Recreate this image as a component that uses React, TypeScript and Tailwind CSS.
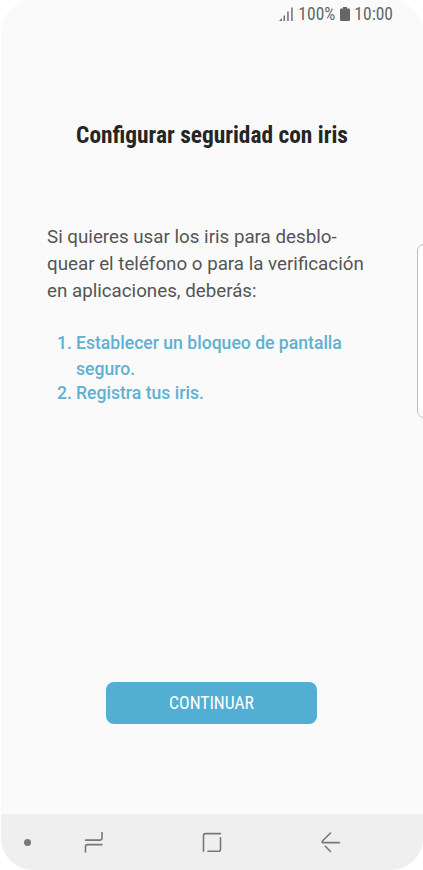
import React from 'react';

const StatusBar: React.FC = () => (
  <div className="flex h-7 items-center justify-end pr-[30px] text-[17.5px] text-[#666666] [font-stretch:75%]">
    <svg width="15" height="15" viewBox="0 0 15 15" fill="#707070" className="mr-1">
      <path d="M0 14 3 11V14Z" />
      <rect x="4.5" y="8.5" width="1.5" height="5.5" />
      <rect x="8.2" y="4.5" width="1.5" height="9.5" />
      <rect x="12.2" y="0.5" width="1.5" height="13.5" />
    </svg>
    <span className="pt-px">100%</span>
    <svg width="10" height="14" viewBox="0 0 10 14" fill="#666666" className="mr-[4px] ml-[5px]">
      <path d="M3 0h4v1.5h2a1 1 0 0 1 1 1V13a1 1 0 0 1-1 1H1a1 1 0 0 1-1-1V2.5a1 1 0 0 1 1-1h2Z" />
    </svg>
    <span className="pt-px">10:00</span>
  </div>
);

const NavBar: React.FC = () => (
  <nav className="flex h-[56px] items-center bg-[#efefef] pl-[22px] text-[#777777]">
    <span className="ml-[0.5px] h-[7px] w-[7px] rounded-full bg-[#777777]" />
    <svg width="20" height="22" viewBox="0 0 20 22" fill="none" stroke="currentColor" strokeWidth="1.6" strokeLinecap="round" strokeLinejoin="round" className="ml-[53.5px]">
      <path d="M1.5 9.1H16q2 0 2-2V1.6M1.5 20.9V15.6q0-2 2-2H18" />
    </svg>
    <svg width="20" height="22" viewBox="0 0 20 22" fill="none" stroke="currentColor" strokeWidth="1.6" strokeLinecap="round" strokeLinejoin="round" className="ml-[98px]">
      <path d="M1.5 20.3V4.6q0-2 2-2H18.5M18.5 6.8V18.3q0 2-2 2H6" />
    </svg>
    <svg width="20" height="22" viewBox="0 0 20 22" fill="none" stroke="currentColor" strokeWidth="1.6" strokeLinecap="round" strokeLinejoin="round" className="ml-[99px]">
      <path d="M9.5 2 1.2 10.2V11.6H18.5M4.3 15.3 9.5 20.5" />
    </svg>
  </nav>
);

export default function App() {
  return (
    <div className="relative h-[870px] w-[423px] overflow-hidden bg-white font-['Roboto',sans-serif]">
      <div className="ml-px flex h-[870px] w-[422px] flex-col overflow-hidden rounded-[32px] bg-[#fafafa]">
        <StatusBar />

        <main className="flex flex-1 flex-col">
          <h1 className="mt-[91px] text-center text-[23.4px] leading-8 font-bold text-[#252525] [font-stretch:75%]">
            Configurar seguridad con iris
          </h1>

          <p className="mt-[73px] pl-[46px] text-[18.75px] leading-[27px] text-[#555555]">
            Si quieres usar los iris para desblo-
            <br />
            quear el teléfono o para la verificación
            <br />
            en aplicaciones, deberás:
          </p>

          <ol className="mt-[25px] pl-[56px] text-[17.6px] leading-[26px] font-medium text-[#5eb1d1]">
            <li className="flex">
              <span className="w-[19px]">1.</span>
              <span>
                Establecer un bloqueo de pantalla
                <br />
                seguro.
              </span>
            </li>
            <li className="-mt-0.5 flex">
              <span className="w-[19px]">2.</span>
              <span>Registra tus iris.</span>
            </li>
          </ol>

          <button className="mt-auto mb-[90px] ml-[105px] h-[42px] w-[211px] rounded-lg bg-[#52aed2] text-[17.6px] text-white [font-stretch:75%]">
            CONTINUAR
          </button>
        </main>

        <NavBar />
      </div>

      {/* Edge panel handle */}
      <div className="absolute top-[244px] left-[417px] h-[174px] w-5 rounded-[7px] border border-[#bdbdbd] bg-white" />
    </div>
  );
}
